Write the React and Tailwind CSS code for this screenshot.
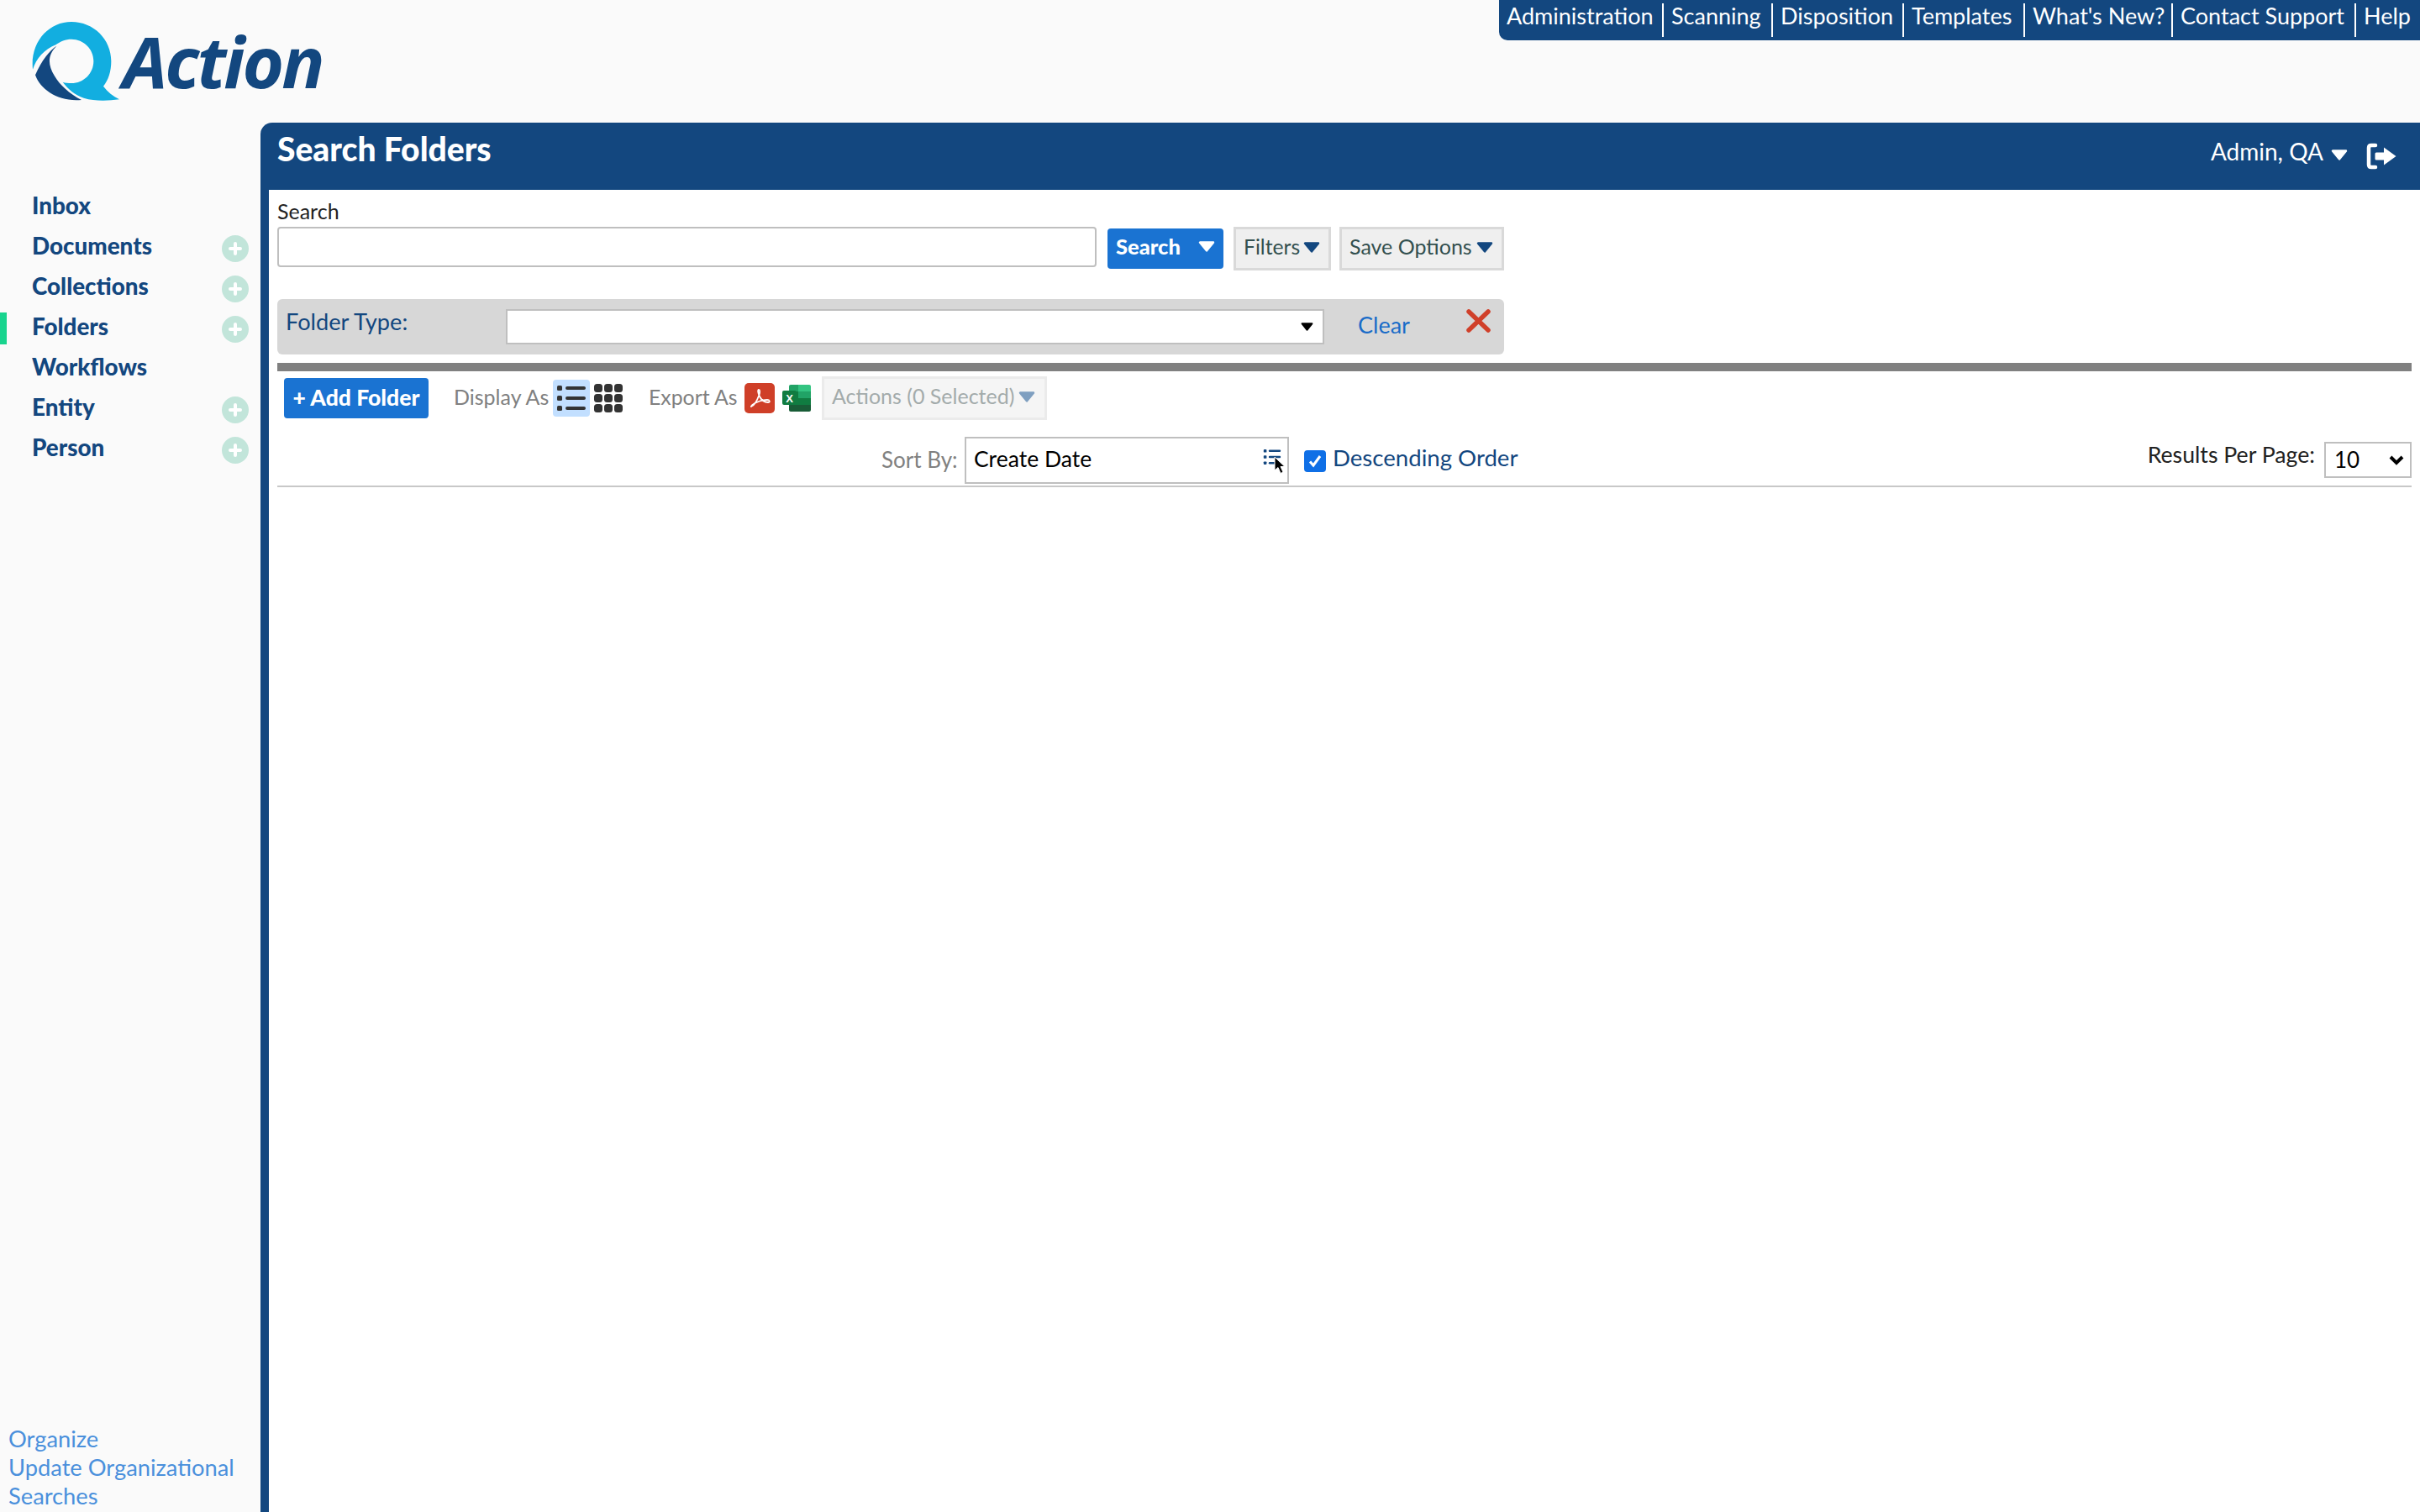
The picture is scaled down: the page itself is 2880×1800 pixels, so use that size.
import React from "react";

const Tri = ({ w = 20, h = 12, fill = "#13477f", className = "" }) => (
  <svg width={w} height={h} viewBox="0 0 20 12" preserveAspectRatio="none" className={className}>
    <path d="M2 1.5H18L10 10.5Z" fill={fill} stroke={fill} strokeWidth="2.4" strokeLinejoin="round" />
  </svg>
);

const Logo = () => (
  <div className="flex items-start h-[94px] mt-[26px] ml-[38px]">
    <svg width="105" height="94" viewBox="115 78 315 282" className="shrink-0">
      <path
        fill="#12aee0"
        d="M118 248C108 150 175 78 256 78C335 78 398 140 398 218C398 255 388 285 370 308C385 328 405 344 427 355C385 360 340 362 300 350C270 340 243 318 225 293C234 296 245 297 256 297C300 297 335 262 335 218C335 175 300 140 256 140C235 140 216 148 200 160C160 175 130 210 118 248Z"
      />
      <path
        fill="#13477f"
        d="M203 164C178 180 150 215 127 268C145 320 210 365 292 357C250 335 215 305 195 270C170 230 172 195 203 164Z"
      />
    </svg>
    <span className="[font-family:'Open_Sans',sans-serif] font-bold italic text-[85px] leading-[94px] text-[#13477f] ml-[3px] mt-[-1px] tracking-[-3px]">
      Action
    </span>
  </div>
);

const navItems = [
  ["Administration", "w-[196px]"],
  ["Scanning", "w-[130px]"],
  ["Disposition", "w-[156px]"],
  ["Templates", "w-[144px]"],
  ["What's New?", "w-[176px]"],
  ["Contact Support", "w-[218px]"],
  ["Help", "w-[76px]"],
];

const TopNav = () => (
  <nav className="ml-auto w-[1096px] h-[48px] bg-[#13477f] rounded-bl-[10px] flex items-start text-white text-[27px] leading-[30px]">
    {navItems.map(([t, w], i) => (
      <div
        key={t}
        className={`${w} h-[40px] mt-[4px] pl-[9px] whitespace-nowrap ${i < navItems.length - 1 ? "border-r-[2px] border-white" : ""}`}
      >
        {t}
      </div>
    ))}
  </nav>
);

const Plus = () => (
  <div className="ml-auto mr-[14px] mt-[6px] w-[32px] h-[32px] rounded-full bg-[#c2e5da] flex items-center justify-center">
    <svg width="16" height="16" viewBox="0 0 16 16">
      <path d="M8 2V14M2 8H14" stroke="#fff" strokeWidth="4" strokeLinecap="round" />
    </svg>
  </div>
);

const sideItems = [
  ["Inbox", false],
  ["Documents", true],
  ["Collections", true],
  ["Folders", true, true],
  ["Workflows", false],
  ["Entity", true],
  ["Person", true],
];

const Sidebar = () => (
  <aside className="w-[310px] shrink-0 flex flex-col justify-between pt-[74px] pb-[2px]">
    <ul>
      {sideItems.map(([t, plus, active]) => (
        <li key={t} className="relative h-[48px] flex items-center pl-[38px] pt-[2px] text-[#13477f] font-black text-[27.8px]">
          {active && <span className="absolute left-0 top-[8px] w-[8px] h-[38px] bg-[#18d48e]" />}
          {t}
          {plus && <Plus />}
        </li>
      ))}
    </ul>
    <div className="pl-[10px] w-[300px] text-[#4a90dc] text-[27.3px] leading-[34px]">
      <div>Organize</div>
      <div>Update Organizational Searches</div>
    </div>
  </aside>
);

const LogoutIcon = () => (
  <svg width="37" height="32" viewBox="0 0 37 32">
    <path d="M11 3H6Q3 3 3 6V26Q3 29 6 29H11" fill="none" stroke="#fff" strokeWidth="4.5" strokeLinecap="round" />
    <path d="M12 11.5H21V5.5L35.5 16L21 26.5V20.5H12Q10.5 20.5 10.5 19V13Q10.5 11.5 12 11.5Z" fill="#fff" />
  </svg>
);

const ListIcon = ({ color = "#333", w = 34, h = 30 }) => (
  <svg width={w} height={h} viewBox="0 0 34 30">
    {[3, 15, 27].map((y) => (
      <g key={y}>
        <rect x="0" y={y - 3} width="6" height="6" rx="1.5" fill={color} />
        <rect x="10" y={y - 2} width="24" height="4" rx="2" fill={color} />
      </g>
    ))}
  </svg>
);

const GridIcon = () => (
  <svg width="34" height="34" viewBox="0 0 34 34" className="ml-[5px]">
    {[0, 12, 24].map((x) =>
      [0, 12, 24].map((y) => <rect key={`${x}-${y}`} x={x} y={y} width="10" height="10" rx="3.5" fill="#333" />)
    )}
  </svg>
);

const PdfIcon = () => (
  <svg width="36" height="36" viewBox="0 0 36 36" className="ml-[10px]">
    <rect width="36" height="36" rx="5" fill="#cf3f28" />
    <path
      d="M8 28C11 27 15 21 17.5 14C18.5 11 18.5 8 17 8C15.5 8 16 12 18 16C20 20 24 23 28 23C31 23 30 20 27 20C22 20 14 22 9.5 26C8 27.5 7.5 28.5 8 28Z"
      fill="none"
      stroke="#fff"
      strokeWidth="1.8"
      strokeLinejoin="round"
    />
  </svg>
);

const ExcelIcon = () => (
  <svg width="34" height="32" viewBox="0 0 34 32" className="ml-[9px]">
    <path d="M8 2Q8 0 10 0H19V8H8Z" fill="#21a366" />
    <path d="M19 0H32Q34 0 34 2V8H19Z" fill="#33c481" />
    <rect x="8" y="8" width="13" height="8" fill="#107c41" />
    <rect x="19" y="8" width="15" height="8" fill="#21a366" />
    <rect x="8" y="16" width="26" height="8" fill="#107c41" />
    <path d="M8 24H34V30Q34 32 32 32H10Q8 32 8 30Z" fill="#185c37" />
    <rect x="0" y="7" width="17" height="17" rx="2" fill="#107c41" />
    <text x="8.5" y="20.5" textAnchor="middle" fontSize="13" fontWeight="700" fill="#fff" fontFamily="Liberation Sans, sans-serif">
      X
    </text>
  </svg>
);

const Body = () => (
  <div className="flex-1 bg-white pl-[10px] pr-[10px] flex flex-col">
    <label className="block h-[44px] pt-[10px] text-[25px] leading-[30px] text-[#222]">Search</label>

    <div className="flex items-start h-[52px]">
      <input type="text" className="w-[975px] h-[48px] bg-white border-[2px] border-[#bfbfbf] rounded-[4px]" />
      <button className="ml-[13px] mt-[2px] w-[138px] h-[48px] bg-[#1a73d2] rounded-[4px] text-white font-black text-[25.5px] flex items-center pl-[10px] pb-[5px]">
        Search
        <Tri w={20} h={13} fill="#fff" className="ml-auto mr-[10px]" />
      </button>
      <button className="ml-[12px] w-[116px] h-[52px] bg-[#efefef] border-[3px] border-[#d9d9d9] text-[#33504f] text-[24.7px] flex items-center pl-[9px] pb-[4px]">
        Filters
        <Tri w={20} h={13} className="ml-[4px]" />
      </button>
      <button className="ml-[10px] w-[196px] h-[52px] bg-[#efefef] border-[3px] border-[#d9d9d9] text-[#33504f] text-[25px] flex items-center pl-[9px] pb-[4px]">
        Save Options
        <Tri w={20} h={13} className="ml-[5px]" />
      </button>
    </div>

    <div className="mt-[34px] w-[1460px] h-[66px] bg-[#d7d7d7] rounded-[6px] flex items-start">
      <span className="ml-[10px] mt-[9px] w-[262px] text-[27.2px] leading-[36px] text-[#13477f]">Folder Type:</span>
      <div className="mt-[12px] w-[974px] h-[42px] bg-white border-[2px] border-[#bfbfbf] flex items-center justify-end pr-[11px]">
        <Tri w={15} h={10} fill="#000" />
      </div>
      <span className="ml-[40px] mt-[13px] text-[27px] leading-[36px] text-[#1a6cc8]">Clear</span>
      <svg width="29" height="28" viewBox="0 0 29 28" className="ml-[67px] mt-[12px]">
        <path d="M3 3L26 25M26 3L3 25" stroke="#d0402a" strokeWidth="5.5" strokeLinecap="round" />
      </svg>
    </div>

    <div className="mt-[10px] h-[10px] bg-[#808080]" />

    <div className="mt-[6px] h-[52px] flex items-center text-[25px] text-[#808080]">
      <button className="ml-[8px] w-[172px] h-[48px] bg-[#1a73d2] rounded-[4px] text-white font-black text-[26.5px] whitespace-nowrap pb-[1px]">
        + Add Folder
      </button>
      <span className="ml-[30px] w-[118px] whitespace-nowrap pb-[2px]">Display As</span>
      <span className="w-[44px] h-[44px] bg-[#c2dfff] rounded-[4px] flex items-center justify-center">
        <ListIcon />
      </span>
      <GridIcon />
      <span className="ml-[31px] w-[104px] whitespace-nowrap pb-[2px] text-[24.8px]">Export As</span>
      <PdfIcon />
      <ExcelIcon />
      <span className="ml-[13px] w-[268px] h-[52px] bg-[#f5f5f5] border-[3px] border-[#ebebeb] text-[#a3abab] flex items-center pl-[9px] pb-[4px] whitespace-nowrap">
        Actions (0 Selected)
        <Tri w={20} h={13} fill="#7f9fc0" className="ml-[5px]" />
      </span>
    </div>

    <div className="relative h-[80px] border-b-[2px] border-[#c8c8c8] flex items-start">
      <span className="ml-[719px] mt-[29px] w-[99px] text-[26px] leading-[36px] text-[#808080] whitespace-nowrap">Sort By:</span>
      <div className="relative mt-[20px] w-[386px] h-[56px] border-[2px] border-[#bfbfbf] flex items-center pl-[9px] pb-[2px] text-[26.5px] text-black">
        Create Date
        <span className="ml-auto mr-[7px] mt-[-6px] flex">
          <ListIcon color="#13477f" w={22} h={18} />
        </span>
        <svg width="14" height="22" viewBox="0 0 14 22" className="absolute right-[2px] top-[21px]">
          <path d="M1 1V17L5 13.5L8 20.5L11 19L8 12.5H13Z" fill="#000" stroke="#fff" strokeWidth="1" />
        </svg>
      </div>
      <span className="ml-[18px] mt-[36px] w-[26px] h-[26px] bg-[#0f6fe6] rounded-[4px] flex items-center justify-center">
        <svg width="18" height="18" viewBox="0 0 18 18">
          <path d="M3 9.5L7 14L15 3" fill="none" stroke="#fff" strokeWidth="3" />
        </svg>
      </span>
      <span className="ml-[8px] mt-[27px] text-[27.6px] leading-[36px] text-[#13477f] whitespace-nowrap">Descending Order</span>
      <span className="ml-auto mt-[23px] text-[26.7px] leading-[36px] text-[#222] whitespace-nowrap">Results Per Page:</span>
      <div className="ml-[11px] mt-[26px] w-[104px] h-[43px] border-[2px] border-[#bfbfbf] flex items-center pl-[10px] text-[26px] text-black">
        10
        <svg width="20" height="14" viewBox="0 0 20 14" className="ml-auto mr-[6px]">
          <path d="M3 3L10 10L17 3" fill="none" stroke="#000" strokeWidth="4" />
        </svg>
      </div>
    </div>
  </div>
);

export default function App() {
  return (
    <div className="w-[2880px] h-[1800px] bg-[#fafafa] flex flex-col overflow-hidden [font-family:Lato,sans-serif]">
      <header className="h-[146px] shrink-0 flex items-start">
        <Logo />
        <TopNav />
      </header>
      <div className="flex-1 flex min-h-0">
        <Sidebar />
        <main className="flex-1 bg-[#13477f] rounded-tl-[14px] pl-[10px] flex flex-col min-w-0">
          <div className="h-[80px] shrink-0 flex items-start text-white">
            <h1 className="ml-[10px] mt-[7px] font-black text-[39px] leading-[48px]">Search Folders</h1>
            <span className="ml-auto mt-[16px] text-[28px] leading-[36px]">Admin, QA</span>
            <Tri w={20} h={13} fill="#fff" className="ml-[9px] mt-[32px]" />
            <span className="ml-[22px] mr-[27px] mt-[24px] flex">
              <LogoutIcon />
            </span>
          </div>
          <Body />
        </main>
      </div>
    </div>
  );
}
